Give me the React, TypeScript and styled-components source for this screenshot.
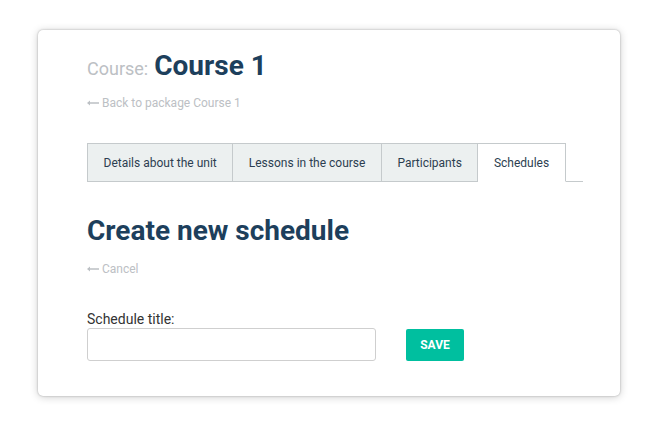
import styled, { createGlobalStyle } from "styled-components";

const GlobalStyle = createGlobalStyle`
  html, body {
    margin: 0;
    padding: 0;
    background: #ffffff;
    font-family: Roboto, "Liberation Sans", Arial, sans-serif;
  }
`;

const Page = styled.div`
  padding: 30px 0 29px 38px;
`;

const Card = styled.div`
  box-sizing: border-box;
  width: 582px;
  height: 366px;
  padding: 21px 37px 0 49px;
  background: #ffffff;
  border-radius: 5px;
  box-shadow: 0 0 2px rgba(0, 0, 0, 0.3), 0 1px 8px rgba(0, 0, 0, 0.2);
`;

const CourseTitle = styled.h1`
  margin: 0;
  display: flex;
  align-items: baseline;
  gap: 6px;
  line-height: 30px;
`;

const CourseLabel = styled.span`
  font-size: 18px;
  font-weight: 400;
  color: #bcc0c4;
`;

const CourseName = styled.span`
  font-size: 28px;
  font-weight: 700;
  color: #1d3f5c;
`;

const BackLink = styled.a<{ $gap: number }>`
  display: flex;
  align-items: center;
  gap: 3px;
  font-size: 12px;
  color: #bcc0c4;
  text-decoration: none;
  line-height: 14px;
  margin-top: ${(p) => p.$gap}px;
`;

const Arrow = () => (
  <svg width="12" height="6" viewBox="0 0 12 6">
    <path d="M0 3 L3 0.5 L3 2.3 L12 2.3 L12 3.7 L3 3.7 L3 5.5 Z" fill="#bcc0c4" />
  </svg>
);

const Tabs = styled.div`
  display: flex;
  margin-top: 33px;
  border-bottom: 1px solid #c5cacc;
  height: 38px;
`;

const Tab = styled.div<{ $active?: boolean }>`
  display: flex;
  align-items: center;
  padding: 0 15.5px;
  font-size: 12px;
  color: #2c3e50;
  background: ${(p) => (p.$active ? "#ffffff" : "#ecf0f0")};
  border: 1px solid #c5cacc;
  border-bottom: ${(p) => (p.$active ? "1px solid #ffffff" : "none")};
  margin-bottom: ${(p) => (p.$active ? "-1px" : "0")};
  & + & {
    border-left: none;
  }
`;

const Heading = styled.h2`
  margin: 33px 0 0;
  font-size: 28px;
  font-weight: 700;
  color: #1d3f5c;
  line-height: 32px;
`;

const Form = styled.form`
  margin-top: 35px;
`;

const Label = styled.label`
  display: block;
  font-size: 14px;
  color: #333333;
  line-height: 16px;
  margin-bottom: 1px;
`;

const Row = styled.div`
  display: flex;
  align-items: center;
  gap: 30px;
`;

const Input = styled.input`
  box-sizing: border-box;
  width: 289px;
  height: 33px;
  border: 1px solid #cfcfcf;
  border-radius: 3px;
  outline: none;
  padding: 0 8px;
`;

const SaveButton = styled.button`
  box-sizing: border-box;
  width: 58px;
  height: 32px;
  border: none;
  border-radius: 2px;
  background: #00bf9f;
  color: #ffffff;
  font-family: inherit;
  font-size: 12px;
  font-weight: 700;
`;

export default function App() {
  return (
    <>
      <GlobalStyle />
      <Page>
        <Card>
          <CourseTitle>
            <CourseLabel>Course:</CourseLabel>
            <CourseName>Course 1</CourseName>
          </CourseTitle>
          <BackLink href="#" $gap={12}>
            <Arrow />
            Back to package Course 1
          </BackLink>
          <Tabs>
            <Tab>Details about the unit</Tab>
            <Tab>Lessons in the course</Tab>
            <Tab>Participants</Tab>
            <Tab $active>Schedules</Tab>
          </Tabs>
          <Heading>Create new schedule</Heading>
          <BackLink href="#" $gap={15}>
            <Arrow />
            Cancel
          </BackLink>
          <Form onSubmit={(e) => e.preventDefault()}>
            <Label>Schedule title:</Label>
            <Row>
              <Input type="text" />
              <SaveButton type="submit">SAVE</SaveButton>
            </Row>
          </Form>
        </Card>
      </Page>
    </>
  );
}
